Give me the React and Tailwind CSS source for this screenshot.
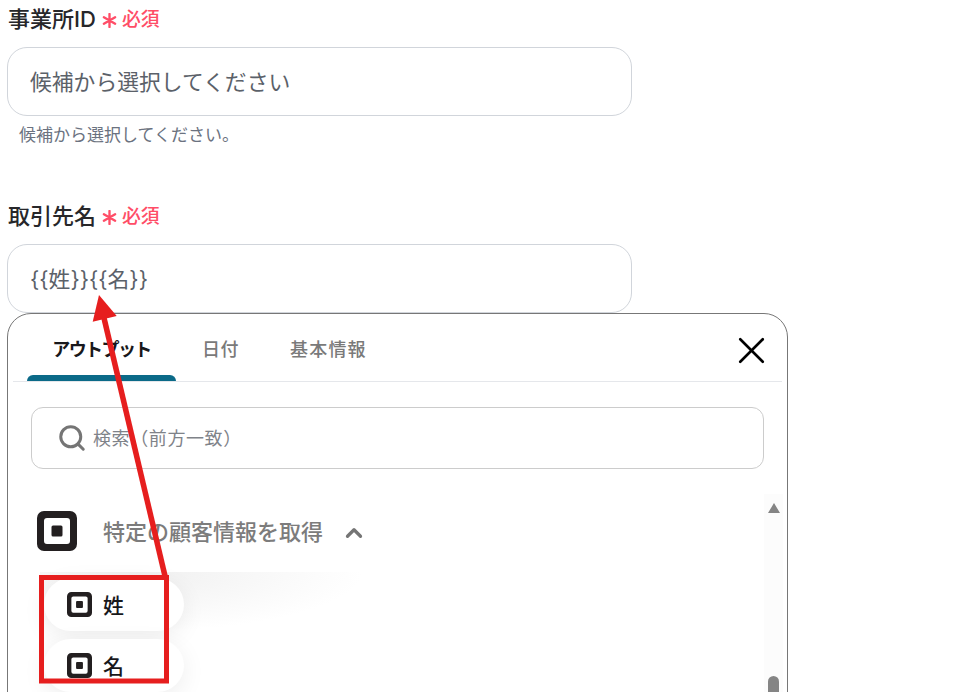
import React from 'react';
import { ChevronUp, Search, X } from 'lucide-react';

const font = { fontFamily: 'Inter, "Noto Sans CJK JP", "Noto Sans", sans-serif' };

const SquareLogo = ({ className }) => (
  <svg viewBox="0 0 40 40" className={className}>
    <path
      fillRule="evenodd"
      fill="#231f20"
      d="M7 0h26a7 7 0 0 1 7 7v26a7 7 0 0 1-7 7H7a7 7 0 0 1-7-7V7a7 7 0 0 1 7-7zm3 7a3 3 0 0 0-3 3v20a3 3 0 0 0 3 3h20a3 3 0 0 0 3-3V10a3 3 0 0 0-3-3z"
    />
    <rect x="14.5" y="14.5" width="11" height="11" rx="1.5" fill="#231f20" />
  </svg>
);

const Required = () => (
  <div className="flex items-center gap-[5px] text-[#ff4d67]">
    <svg viewBox="0 0 16 16" className="w-[15px] h-[15px] mt-[3px]" stroke="currentColor" strokeWidth="2.5" strokeLinecap="round">
      <path d="M8 1v14M2 4.5l12 7M14 4.5l-12 7" />
    </svg>
    <span className="mt-[2px] text-[18.8px] leading-none font-medium">必須</span>
  </div>
);

const Field = ({ label, value, help }) => (
  <div>
    <div className="flex items-center gap-[6px] h-[22px] pl-px">
      <span className="text-[22px] leading-none font-medium text-[#27272a]">{label}</span>
      <Required />
    </div>
    <div className="mt-[17px] h-[69px] w-[625px] rounded-[20px] border border-[#d1d5db] bg-white flex items-center px-[22px] pt-[2px] text-[21.8px] text-[#5b6169]">
      {value}
    </div>
    {help && <p className="mt-[7px] pl-[12px] text-[17px] leading-[24px] text-[#6b7280]">{help}</p>}
  </div>
);

const Chip = ({ label }) => (
  <div className="relative w-[140px] h-[53px] rounded-full bg-white flex items-center gap-[11px] pl-[23px] shadow-[0_6px_24px_rgba(0,0,0,0.07)]">
    <SquareLogo className="w-[25px] h-[25px]" />
    <span className="pt-[2px] text-[21px] font-medium text-[#18181b]">{label}</span>
  </div>
);

const App = () => {
  return (
    <div className="relative w-[972px] h-[692px] overflow-hidden bg-white pl-[7px] pt-[8px]" style={font}>
      <Field label="事業所ID" value="候補から選択してください" help="候補から選択してください。" />
      <div className="mt-[58px]">
        <Field label="取引先名" value="{{姓}}{{名}}" />
      </div>

      {/* Output picker */}
      <div className="relative w-[781px] h-[500px] rounded-[24px] border border-[#777777] bg-white">
        <div className="flex items-end h-[68px] mx-[5px] border-b border-[#e5e7eb] pl-[14px] pr-[8px]">
          <div className="w-[149px] h-[67px] flex flex-col items-center justify-between">
            <span className="mt-[23px] text-[18px] leading-[26px] tracking-[-1.6px] font-bold text-[#18181b]">アウトプット</span>
            <div className="w-full h-[6px] rounded-t-[6px] bg-[#0b6a88]"></div>
          </div>
          <span className="ml-[26px] mb-[18px] text-[18px] leading-[26px] tracking-[0.5px] font-medium text-[#7a7a7a]">日付</span>
          <span className="ml-[51px] mb-[18px] text-[18px] leading-[26px] tracking-[1.2px] font-medium text-[#7a7a7a]">基本情報</span>
          <X className="ml-auto mb-[8px] w-[45px] h-[45px] text-black" strokeWidth={1.4} />
        </div>

        <div className="mt-[25px] mx-[23px] h-[62px] rounded-[12px] border border-[#cccccc] flex items-center pl-[25px]">
          <Search className="w-[30px] h-[30px] text-[#757575]" strokeWidth={2.4} />
          <span className="ml-[6px] text-[18px] tracking-[0.6px] text-[#7f8389]">検索（前方一致）</span>
        </div>

        <div className="mt-[42px] ml-[29px] flex items-center h-[40px]">
          <SquareLogo className="w-[40px] h-[40px]" />
          <span className="ml-[26px] pt-[3px] text-[22px] font-medium text-[#7c7c7c]">特定の顧客情報を取得</span>
          <ChevronUp className="ml-[18px] mt-[3px] w-[26px] h-[26px] text-[#757575]" strokeWidth={3} />
        </div>

        <div className="relative mt-[27px] ml-[36px] w-[140px] flex flex-col gap-[8px]">
          {/* soft shade under the section header */}
          <div className="absolute -top-[6px] -left-[4px] w-[325px] h-[60px] bg-[radial-gradient(ellipse_at_30%_0%,#f0f0f0,transparent_70%)]"></div>
          <Chip label="姓" />
          <Chip label="名" />
        </div>

        {/* Scrollbar */}
        <div className="absolute left-[756px] top-[180px] bottom-0 w-[19px] bg-[#fcfcfc]">
          <div className="mt-[9px] mx-auto w-0 h-0 border-x-[6px] border-x-transparent border-b-[10px] border-b-[#858585]"></div>
          <div className="mt-[163px] mx-auto w-[11px] h-[60px] rounded-full bg-[#858585]"></div>
        </div>
      </div>

      {/* Red annotation on top of the screenshot */}
      <svg className="absolute left-0 top-0 pointer-events-none" width="972" height="692">
        <line x1="165" y1="576" x2="104" y2="318" stroke="#e61e1e" strokeWidth="5.5" />
        <polygon points="99,295 92.7,321.7 116.7,316" fill="#e61e1e" />
        <rect x="41.5" y="577.5" width="125" height="103.5" fill="none" stroke="#e61e1e" strokeWidth="5" />
      </svg>
    </div>
  );
};

export default App;
